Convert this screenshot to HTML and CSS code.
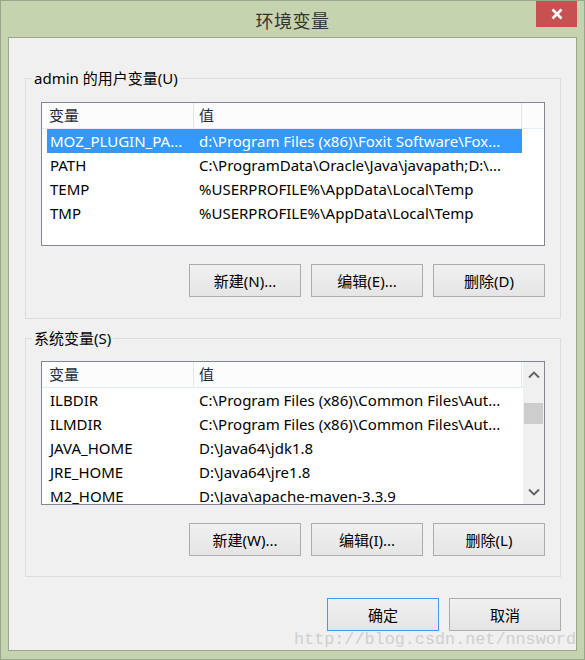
FILE: index.html
```html
<!DOCTYPE html>
<html lang="zh-CN">
<head>
<meta charset="utf-8">
<title>环境变量</title>
<link rel="stylesheet" href="styles.css">
</head>
<body>
<div class="window">
  <div class="titlebar">
    <div class="tb-side"></div>
    <div class="title">环境变量</div>
    <div class="tb-side tb-right">
      <div class="close">
        <svg width="14" height="14" viewBox="0 0 14 14"><path d="M2.5 2.5 L11.5 11.5 M11.5 2.5 L2.5 11.5" stroke="#fff" stroke-width="2.6" fill="none"/></svg>
      </div>
    </div>
  </div>
  <div class="client">
    <div class="group g1">
      <div class="group-title">admin 的用户变量(U)</div>
      <div class="list">
        <div class="lv-main">
          <div class="lv-head"><div class="hc c1">变量</div><div class="hc c2">值</div></div>
          <div class="rows">
            <div class="row sel"><span class="n">MOZ_PLUGIN_PA...</span><span class="v">d:\Program Files (x86)\Foxit Software\Fox...</span></div>
            <div class="row"><span class="n">PATH</span><span class="v">C:\ProgramData\Oracle\Java\javapath;D:\...</span></div>
            <div class="row"><span class="n">TEMP</span><span class="v">%USERPROFILE%\AppData\Local\Temp</span></div>
            <div class="row"><span class="n">TMP</span><span class="v">%USERPROFILE%\AppData\Local\Temp</span></div>
          </div>
        </div>
      </div>
      <div class="btns">
        <div class="btn">新建(N)...</div>
        <div class="btn">编辑(E)...</div>
        <div class="btn">删除(D)</div>
      </div>
    </div>

    <div class="group g2">
      <div class="group-title">系统变量(S)</div>
      <div class="list">
        <div class="lv-main">
          <div class="lv-head"><div class="hc c1">变量</div><div class="hc c2">值</div></div>
          <div class="rows">
            <div class="row"><span class="n">ILBDIR</span><span class="v">C:\Program Files (x86)\Common Files\Aut...</span></div>
            <div class="row"><span class="n">ILMDIR</span><span class="v">C:\Program Files (x86)\Common Files\Aut...</span></div>
            <div class="row"><span class="n">JAVA_HOME</span><span class="v">D:\Java64\jdk1.8</span></div>
            <div class="row"><span class="n">JRE_HOME</span><span class="v">D:\Java64\jre1.8</span></div>
            <div class="row"><span class="n">M2_HOME</span><span class="v">D:\Java\apache-maven-3.3.9</span></div>
          </div>
        </div>
        <div class="vscroll">
          <div class="arrow">
            <svg width="14" height="10" viewBox="0 0 14 10"><path d="M2 7.5 L7 2.5 L12 7.5" stroke="#606060" stroke-width="1.8" fill="none"/></svg>
          </div>
          <div class="track"><div class="thumb"></div></div>
          <div class="arrow">
            <svg width="14" height="10" viewBox="0 0 14 10"><path d="M2 2.5 L7 7.5 L12 2.5" stroke="#606060" stroke-width="1.8" fill="none"/></svg>
          </div>
        </div>
      </div>
      <div class="btns">
        <div class="btn">新建(W)...</div>
        <div class="btn">编辑(I)...</div>
        <div class="btn">删除(L)</div>
      </div>
    </div>

    <div class="dlg-btns">
      <div class="btn default">确定</div>
      <div class="btn">取消</div>
    </div>
    <div class="watermark">http://blog.csdn.net/nnsword</div>
  </div>
</div>
</body>
</html>
```

FILE: styles.css
```css
* { box-sizing: border-box; }

html, body {
  margin: 0;
  padding: 0;
  background: #c5d3ae;
}

body {
  width: 585px;
  height: 660px;
  overflow: hidden;
  font-family: "Noto Sans", "Noto Sans CJK SC", sans-serif;
  font-size: 15px;
  color: #000;
}

.window {
  width: 585px;
  height: 660px;
  background: #c5d3ae;
  border: 1px solid #98a68a;
  padding: 0 7px 8px 7px;
  display: flex;
  flex-direction: column;
}

.titlebar {
  height: 36px;
  flex: none;
  display: grid;
  grid-template-columns: 1fr auto 1fr;
  align-items: start;
  margin: 0 -7px;
}

.title {
  font-family: "Noto Sans CJK SC", sans-serif;
  font-size: 18px;
  line-height: 22px;
  margin-top: 8px;
  color: #333;
  letter-spacing: 0.5px;
}

.tb-right {
  display: flex;
  justify-content: flex-end;
  padding-right: 7px;
}

.close {
  width: 41px;
  height: 26px;
  background: #c75050;
  display: flex;
  align-items: center;
  justify-content: center;
}

.client {
  position: relative;
  flex: 1;
  background: #f0f0f0;
  border: 1px solid #9aa78c;
  padding: 40px 15px 0 16px;
}

.group {
  border: 1px solid #dcdcdc;
  padding: 0 15px 0 15px;
}

.g1 { padding-bottom: 21px; }
.g2 { margin-top: 19px; padding-bottom: 20px; }

.group-title {
  display: block;
  width: fit-content;
  height: 20px;
  line-height: 20px;
  margin: -11px 0 0 -9px;
  padding: 0 2px;
  background: #f0f0f0;
  color: #000;
  white-space: nowrap;
}

.list {
  height: 144px;
  border: 1px solid #828790;
  background: #fff;
  display: flex;
  overflow: hidden;
}

.g1 .list { margin-top: 14px; }
.g2 .list { margin-top: 13px; }

.lv-main {
  flex: 1;
  min-width: 0;
  overflow: hidden;
}

.lv-head {
  height: 26px;
  display: flex;
  background: #fcfcfd;
  border-bottom: 1px solid #e3ebf5;
}

.hc {
  height: 25px;
  line-height: 25px;
  border-right: 1px solid #e3e8ef;
  color: #1e2a3a;
  white-space: nowrap;
}

.c1 { width: 152px; padding-left: 7px; }
.c2 { width: 328px; padding-left: 5px; }

.rows {
  margin-left: 5px;
  width: 475px;
}

.row {
  height: 24px;
  display: flex;
  align-items: center;
  white-space: nowrap;
  line-height: 24px;
}

.row .n {
  width: 146px;
  padding-left: 3px;
  overflow: hidden;
}

.row .v {
  flex: 1;
  padding-left: 6px;
  overflow: hidden;
}

.row.sel {
  background: #3399ff;
  color: #fff;
  outline: 1px dotted #b87a3c;
  outline-offset: -1px;
}

.vscroll {
  width: 21px;
  flex: none;
  background: #f0f0f0;
  display: flex;
  flex-direction: column;
}

.arrow {
  height: 25px;
  display: flex;
  align-items: center;
  justify-content: center;
}

.track {
  flex: 1;
  padding-top: 16px;
}

.thumb {
  margin: 0 1px 0 1px;
  height: 21px;
  background: #cdcdcd;
}

.btns {
  margin-top: 18px;
  display: flex;
  justify-content: flex-end;
  gap: 10px;
}

.btn {
  width: 112px;
  height: 33px;
  border: 1px solid #acacac;
  background: linear-gradient(#f0f0f0, #e5e5e5);
  display: flex;
  align-items: center;
  justify-content: center;
  color: #000;
  white-space: nowrap;
}

.btn.default {
  border-color: #4a97e6;
}

.dlg-btns {
  margin-top: 21px;
  display: flex;
  justify-content: flex-end;
  gap: 10px;
}

.watermark {
  position: absolute;
  left: 285px;
  top: 592px;
  font-family: "Liberation Mono", monospace;
  font-size: 16.8px;
  line-height: 20px;
  color: #cfcfcf;
  white-space: nowrap;
}
```
